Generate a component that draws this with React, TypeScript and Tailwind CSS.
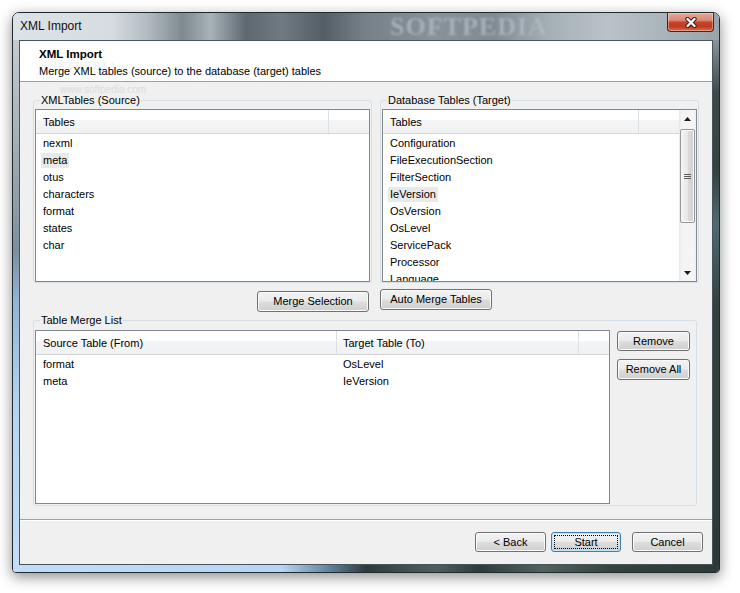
import React from "react";

const srcItems = ["nexml", "meta", "otus", "characters", "format", "states", "char"];
const dbItems = [
  "Configuration",
  "FileExecutionSection",
  "FilterSection",
  "IeVersion",
  "OsVersion",
  "OsLevel",
  "ServicePack",
  "Processor",
  "Language",
];

const headerBg =
  "bg-[linear-gradient(to_bottom,#ffffff_0%,#ffffff_42%,#f4f5f7_43%,#eff1f3_100%)]";

function WinButton({
  label,
  className = "",
  isDefault = false,
}: {
  label: string;
  className?: string;
  isDefault?: boolean;
}) {
  const base =
    "flex shrink-0 items-center justify-center rounded-[3px] border bg-[linear-gradient(to_bottom,#f2f2f2_0%,#ebebeb_48%,#dddddd_52%,#cfcfcf_100%)] text-[11px] leading-none text-black";
  const normal = "border-[#707070] shadow-[inset_0_0_0_1px_#fbfbfb]";
  const def =
    "border-[#3c7fb1] shadow-[inset_0_0_0_1px_#bfe6fb] outline outline-1 outline-dotted outline-black outline-offset-[-4px]";
  return <div className={`${base} ${isDefault ? def : normal} ${className}`}>{label}</div>;
}

function Row({ text, sel = false }: { text: string; sel?: boolean }) {
  return (
    <div className="flex h-[17px] shrink-0 items-center">
      <span className={`ml-[5px] whitespace-nowrap px-[2px] leading-[15px] ${sel ? "bg-[#e9e9e9]" : ""}`}>
        {text}
      </span>
    </div>
  );
}

function Group({
  label,
  className = "",
  children,
}: {
  label: string;
  className?: string;
  children: React.ReactNode;
}) {
  return (
    <div className={`shrink-0 rounded-[3px] border border-[#d5dfe5] px-[1px] ${className}`}>
      <div className="relative -mt-[7px] ml-[5px] w-fit bg-[#f0f0f0] px-[1px] text-[11px] leading-[13px] text-black">
        {label}
      </div>
      {children}
    </div>
  );
}

function Arrow({ up }: { up: boolean }) {
  return (
    <svg width="7" height="4" viewBox="0 0 7 4">
      {up ? <path d="M0 4 L3.5 0 L7 4 Z" fill="#1a1a1a" /> : <path d="M0 0 L7 0 L3.5 4 Z" fill="#1a1a1a" />}
    </svg>
  );
}

export default function App() {
  return (
    <div className="h-[593px] w-[740px] overflow-hidden bg-white pl-[12px] pt-[12px] font-['Liberation_Sans',Arial,sans-serif] text-black">
      <div className="flex h-[561px] w-[708px] flex-col overflow-hidden rounded-t-[7px] rounded-b-[4px] border border-[#1f2a2e] shadow-[0_4px_14px_rgba(0,0,0,0.45)]">
        {/* Title bar */}
        <div className="relative flex h-[27px] shrink-0 items-start overflow-hidden bg-[linear-gradient(90deg,#dde2e6_0%,#d6dce0_14%,#b3bcc2_19%,#7e8990_24%,#a9b2b8_28%,#5d6870_33%,#6f7a81_38%,#535e66_44%,#76818a_50%,#87929a_60%,#7f8a92_68%,#a5afb6_76%,#b9c2c8_84%,#aab4bb_92%,#98a3ab_100%)]">
          <span className="relative z-10 pl-[7px] pt-[6px] text-[12px] leading-[15px] text-[#111]">XML Import</span>
          <span className="pointer-events-none absolute left-[377px] top-[0px] font-['Liberation_Serif',serif] text-[26px] font-bold leading-[27px] tracking-[1px] text-[#b4bcc1] opacity-75 blur-[1px]">
            SOFTPEDIA
          </span>
          <div className="relative z-10 ml-auto mr-[5px] flex h-[19px] w-[47px] items-center justify-center rounded-b-[4px] border border-t-0 border-[#5a1b10] bg-[linear-gradient(to_bottom,#e7a795_0%,#d88b78_40%,#c4452b_52%,#c13a20_75%,#d5704f_100%)] shadow-[inset_0_0_0_1px_rgba(255,255,255,0.35)]">
            <svg width="14" height="11" viewBox="0 0 14 11">
              <path d="M3.5 2 L10.5 9 M10.5 2 L3.5 9" stroke="#4a1a12" strokeWidth="4.4" strokeLinecap="round" />
              <path d="M3.5 2 L10.5 9 M10.5 2 L3.5 9" stroke="#ffffff" strokeWidth="2.4" strokeLinecap="round" />
            </svg>
          </div>
        </div>

        {/* Middle */}
        <div className="flex h-[525px] shrink-0">
          <div className="w-[6px] bg-[linear-gradient(to_bottom,#c5ccd1_0%,#9aa6ae_25%,#7c8f9e_40%,#94b5d6_50%,#b6d3f1_70%,#c3ddf8_100%)]" />
          <div className="relative flex w-[694px] flex-col border border-[#47545c] bg-[#f0f0f0]">
            {/* watermark */}
            <span className="pointer-events-none absolute left-[40px] top-[43px] text-[10px] leading-[11px] text-[#dcdcdc]">
              www.softpedia.com
            </span>

            {/* Header */}
            <div className="relative h-[41px] shrink-0 border-b border-[#a0a0a0] bg-white pl-[19px] pt-[6px]">
              <span className="pointer-events-none absolute left-[20px] top-[19px] font-['Liberation_Serif',serif] text-[12px] font-bold leading-[12px] tracking-[1px] text-[#f3f3f3]">
                SOFTPEDIA
              </span>
              <div className="relative text-[11.5px] font-bold leading-[14px]">XML Import</div>
              <div className="relative mt-[3px] text-[11px] leading-[14px]">
                Merge XML tables (source) to the database (target) tables
              </div>
            </div>

            {/* Source / target groups */}
            <div className="mt-[18px] flex gap-[8px] pl-[13px]">
              <Group label="XMLTables (Source)" className="w-[339px]">
                <div className="mt-[2px] flex h-[173px] flex-col overflow-hidden border border-[#828790] bg-white text-[11px]">
                  <div className={`flex h-[24px] shrink-0 border-b border-[#d5d5d5] ${headerBg}`}>
                    <div className="flex w-[293px] items-center border-r border-[#dcdfe3] pl-[7px] pt-[1px]">Tables</div>
                    <div className="flex-1" />
                  </div>
                  <div className="flex flex-col pt-[1px]">
                    {srcItems.map((t) => (
                      <Row key={t} text={t} sel={t === "meta"} />
                    ))}
                  </div>
                </div>
              </Group>

              <Group label="Database Tables (Target)" className="w-[319px]">
                <div className="mt-[2px] flex h-[173px] overflow-hidden border border-[#828790] bg-white text-[11px]">
                  <div className="flex w-[296px] flex-col overflow-hidden">
                    <div className={`flex h-[24px] shrink-0 border-b border-[#d5d5d5] ${headerBg}`}>
                      <div className="flex w-[256px] items-center border-r border-[#dcdfe3] pl-[7px] pt-[1px]">Tables</div>
                      <div className="flex-1" />
                    </div>
                    <div className="flex flex-col pt-[1px]">
                      {dbItems.map((t) => (
                        <Row key={t} text={t} sel={t === "IeVersion"} />
                      ))}
                    </div>
                  </div>
                  {/* scrollbar */}
                  <div className="flex w-[17px] flex-col bg-[linear-gradient(to_right,#e6e6e6_0%,#f3f3f3_15%,#f5f5f5_85%,#ededed_100%)]">
                    <div className="flex h-[17px] shrink-0 items-center justify-center">
                      <Arrow up />
                    </div>
                    <div className="mx-auto mt-[2px] flex h-[94px] w-[15px] shrink-0 flex-col items-center justify-center gap-[1px] rounded-[2px] border border-[#979797] bg-[linear-gradient(to_right,#f4f4f4_0%,#e8e8e8_50%,#dadada_51%,#d2d2d2_100%)] shadow-[inset_0_0_0_1px_#f8f8f8]">
                      <div className="h-[1px] w-[7px] bg-[#5e5e5e]" />
                      <div className="h-[1px] w-[7px] bg-[#5e5e5e]" />
                      <div className="h-[1px] w-[7px] bg-[#5e5e5e]" />
                    </div>
                    <div className="flex-1" />
                    <div className="flex h-[17px] shrink-0 items-center justify-center">
                      <Arrow up={false} />
                    </div>
                  </div>
                </div>
              </Group>
            </div>

            {/* middle buttons */}
            <div className="mt-[6px] flex items-start gap-[8px] pl-[13px]">
              <div className="flex w-[339px] justify-end pr-[3px]">
                <WinButton label="Merge Selection" className="mt-[2px] h-[21px] w-[112px]" />
              </div>
              <WinButton label="Auto Merge Tables" className="h-[21px] w-[112px]" />
            </div>

            {/* Merge list */}
            <div className="mt-[8px] pl-[13px]">
              <Group label="Table Merge List" className="w-[664px] pb-[1px]">
                <div className="mt-[3px] flex">
                  <div className="flex h-[174px] w-[575px] flex-col overflow-hidden border border-[#828790] bg-white text-[11px]">
                    <div className={`flex h-[24px] shrink-0 border-b border-[#d5d5d5] ${headerBg}`}>
                      <div className="flex w-[301px] items-center border-r border-[#dcdfe3] pl-[7px] pt-[1px]">
                        Source Table (From)
                      </div>
                      <div className="flex w-[242px] items-center border-r border-[#dcdfe3] pl-[6px] pt-[1px]">
                        Target Table (To)
                      </div>
                      <div className="flex-1" />
                    </div>
                    <div className="flex flex-col pt-[1px]">
                      <div className="flex h-[17px] items-center">
                        <span className="w-[301px] pl-[7px]">format</span>
                        <span className="pl-[6px]">OsLevel</span>
                      </div>
                      <div className="flex h-[17px] items-center">
                        <span className="w-[301px] pl-[7px]">meta</span>
                        <span className="pl-[6px]">IeVersion</span>
                      </div>
                    </div>
                  </div>
                  <div className="ml-[7px] mt-[1px] flex flex-col gap-[8px]">
                    <WinButton label="Remove" className="h-[20px] w-[73px]" />
                    <WinButton label="Remove All" className="h-[21px] w-[73px]" />
                  </div>
                </div>
              </Group>
            </div>

            {/* separator */}
            <div className="mt-[13px] h-[2px] border-t border-[#a0a0a0] bg-white" />

            {/* bottom buttons */}
            <div className="mt-[11px] flex justify-end pr-[9px]">
              <WinButton label="< Back" className="h-[20px] w-[71px]" />
              <WinButton label="Start" isDefault className="ml-[5px] h-[20px] w-[70px]" />
              <WinButton label="Cancel" className="ml-[11px] h-[20px] w-[71px]" />
            </div>
          </div>
          <div className="w-[6px] bg-[linear-gradient(to_bottom,#8a949b_0%,#3d4849_10%,#34423f_25%,#4f6a74_35%,#34423f_50%,#2c3837_100%)]" />
        </div>

        {/* Bottom frame */}
        <div className="h-[7px] shrink-0 bg-[linear-gradient(to_right,#c2dcf7_0%,#b9d5f3_38%,#5f7f97_45%,#2e3b3e_50%,#4f5f60_60%,#2f3b3a_66%,#51625f_75%,#34413f_85%,#2f3a38_100%)]" />
      </div>
    </div>
  );
}
